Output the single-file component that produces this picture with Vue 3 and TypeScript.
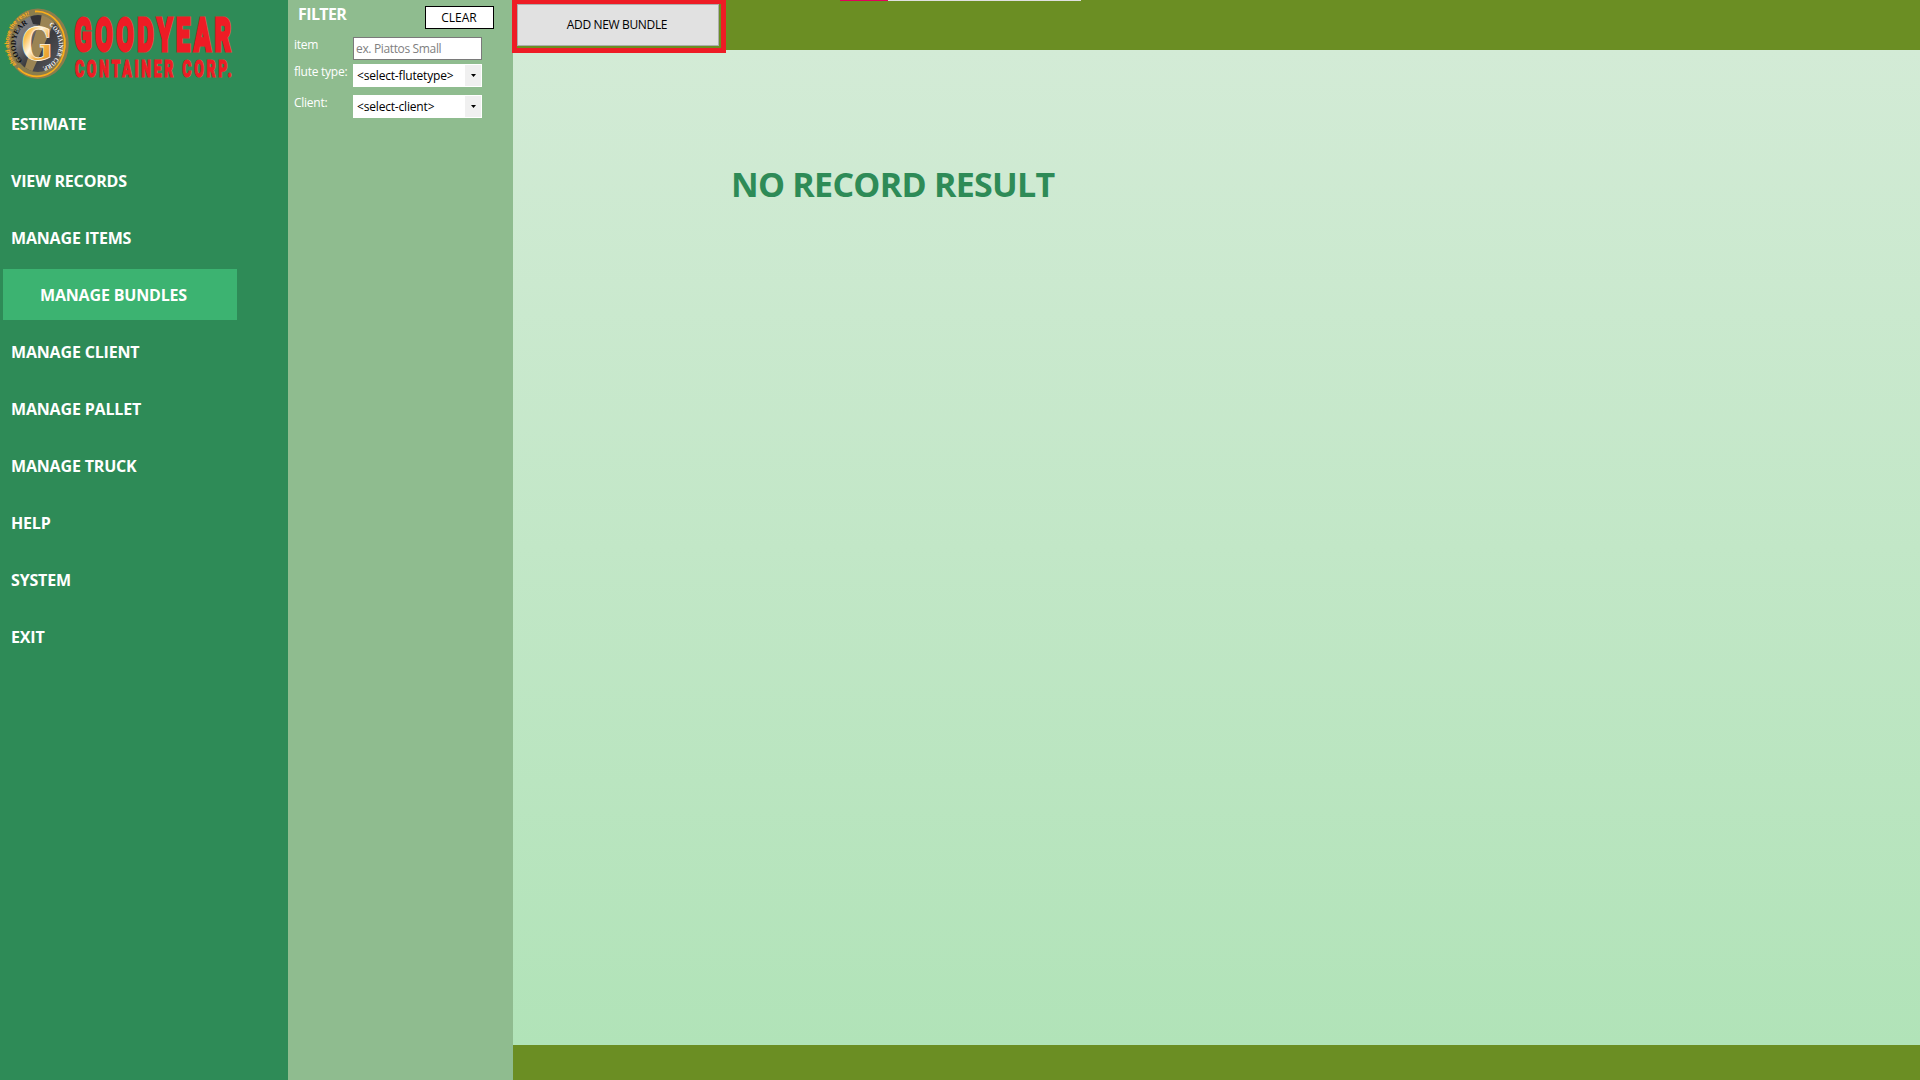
<script setup lang="ts">
import { ref } from 'vue'

interface NavItem {
  id: string
  label: string
}

const navItems: NavItem[] = [
  { id: 'estimate', label: 'ESTIMATE' },
  { id: 'records', label: 'VIEW RECORDS' },
  { id: 'items', label: 'MANAGE ITEMS' },
  { id: 'bundles', label: 'MANAGE BUNDLES' },
  { id: 'client', label: 'MANAGE CLIENT' },
  { id: 'pallet', label: 'MANAGE PALLET' },
  { id: 'truck', label: 'MANAGE TRUCK' },
  { id: 'help', label: 'HELP' },
  { id: 'system', label: 'SYSTEM' },
  { id: 'exit', label: 'EXIT' },
]

const active = ref('bundles')
const itemName = ref('')

function clearFilter() {
  itemName.value = ''
}
</script>

<template>
  <div class="app">
    <aside class="sidebar">
      <svg class="logo" width="240" height="90" viewBox="0 0 240 90">
        <defs>
          <linearGradient id="gold" x1="0" y1="0" x2="1" y2="1">
            <stop offset="0" stop-color="#f39a12" />
            <stop offset="0.25" stop-color="#fbc055" />
            <stop offset="0.42" stop-color="#fff6e0" />
            <stop offset="0.6" stop-color="#f5b548" />
            <stop offset="1" stop-color="#dc8a10" />
          </linearGradient>
          <linearGradient id="disc" x1="0" y1="0" x2="1" y2="1">
            <stop offset="0" stop-color="#8a8a8c" />
            <stop offset="0.3" stop-color="#747477" />
            <stop offset="0.55" stop-color="#3c3c40" />
            <stop offset="1" stop-color="#5c5c60" />
          </linearGradient>
          <clipPath id="discClip"><ellipse cx="38" cy="43.500" rx="24.500" ry="28.500" /></clipPath>
          <path id="arcOuter" d="M16.500 64.500 A25.500 29 0 0 1 34 15" />
          <path id="arcLeft" d="M22.500 60.500 A18.500 21.500 0 0 1 33.500 22.500" />
          <path id="arcRight" d="M49 25.500 A18.500 22 0 0 1 35 66" />
        </defs>
        <ellipse cx="37.800" cy="43.700" rx="31" ry="35.300" fill="#8b7d4c" />
        <path d="M35 11.500 A28 32.500 0 1 1 18 68" fill="none" stroke="#f9ad1b" stroke-width="1.800" />
        <ellipse cx="38" cy="43.500" rx="24.500" ry="28.500" fill="url(#disc)" />
        <g clip-path="url(#discClip)">
          <path d="M42 12 L56 18 L33 70 L30 76 L23 74 Z" fill="#9b8454" />
          <path d="M30 16 L42 13 L40 25 L33 24 Z" fill="#333337" />
        </g>
        <text class="seal slogan"><textPath href="#arcOuter" textLength="60" lengthAdjust="spacingAndGlyphs">ahead above the rest!</textPath></text>
        <text class="seal name"><textPath href="#arcLeft" textLength="43" lengthAdjust="spacingAndGlyphs">GOODYEAR</textPath></text>
        <text class="seal corp"><textPath href="#arcRight" textLength="52" lengthAdjust="spacingAndGlyphs">CONTAINER CORP.</textPath></text>
        <text class="seal-g" transform="translate(21.500 60) scale(0.830 1)">G</text>
        <text class="brand big" transform="translate(74.500 50.500) scale(0.540 1)" textLength="290">GOODYEAR</text>
        <text class="brand small" transform="translate(75 76.500) scale(0.580 1)" textLength="270">CONTAINER CORP.</text>
      </svg>
      <nav class="nav">
        <a
          v-for="item in navItems"
          :key="item.id"
          class="nav-item"
          :class="{ active: item.id === active }"
          @click="active = item.id"
        >{{ item.label }}</a>
      </nav>
    </aside>

    <section class="filter">
      <header class="filter-head">
        <h2 class="filter-title">FILTER</h2>
        <button class="clear" type="button" @click="clearFilter">CLEAR</button>
      </header>
      <div class="row row-item">
        <label class="label">item</label>
        <input v-model="itemName" class="input" type="text" placeholder="ex. Piattos Small" />
      </div>
      <div class="row row-flute">
        <label class="label">flute type:</label>
        <div class="select">
          <span>&lt;select-flutetype&gt;</span>
          <i class="drop"><svg width="5" height="3" viewBox="0 0 5 3"><path d="M0 0H5L2.500 3Z" /></svg></i>
        </div>
      </div>
      <div class="row">
        <label class="label">Client:</label>
        <div class="select">
          <span>&lt;select-client&gt;</span>
          <i class="drop"><svg width="5" height="3" viewBox="0 0 5 3"><path d="M0 0H5L2.500 3Z" /></svg></i>
        </div>
      </div>
    </section>

    <main class="main">
      <header class="topbar">
        <div class="highlight">
          <button class="add" type="button">ADD NEW BUNDLE</button>
        </div>
        <div class="progress"><div class="progress-value"></div></div>
      </header>
      <div class="content">
        <h1 class="empty">NO RECORD RESULT</h1>
      </div>
      <footer class="bottombar"></footer>
    </main>
  </div>
</template>

<style>
body {
  margin: 0;
  overflow: hidden;
}
</style>

<style scoped>
.app {
  display: flex;
  width: 1920px;
  height: 1080px;
  overflow: hidden;
  font-family: 'Open Sans', 'Noto Sans', sans-serif;
  font-size: 12px;
}
.sidebar {
  width: 288px;
  flex: none;
  background: #2e8b57;
}
.logo {
  display: block;
}
.seal {
  font-family: 'Liberation Serif', serif;
  font-weight: 700;
}
.slogan {
  font-family: 'Liberation Sans', sans-serif;
  font-size: 6.5px;
  fill: #fdb01b;
}
.name {
  font-size: 7.5px;
  fill: #0c0c0e;
}
.corp {
  font-size: 6.5px;
  fill: #fff;
}
.seal-g {
  font-family: 'DejaVu Serif', serif;
  font-weight: 700;
  font-size: 44px;
  fill: url(#gold);
  stroke: #fff6e4;
  stroke-width: 0.8px;
}
.brand {
  font-family: Roboto, 'Liberation Sans', sans-serif;
  font-weight: 900;
  fill: #ee1c25;
  stroke: #ee1c25;
}
.big {
  font-size: 47px;
  stroke-width: 3px;
}
.small {
  font-size: 24px;
  stroke-width: 1.2px;
}
.nav {
  display: flex;
  flex-direction: column;
  gap: 6px;
  padding: 8px 51px 0 3px;
}
.nav-item {
  height: 51px;
  padding-left: 8px;
  box-sizing: border-box;
  line-height: 53px;
  font-size: 16px;
  font-weight: 700;
  letter-spacing: -0.17px;
  color: #fff;
  cursor: pointer;
}
.nav-item.active {
  padding-left: 37px;
  background: #3cb371;
}
.filter {
  width: 225px;
  flex: none;
  background: #8fbc8f;
  color: #fff;
}
.filter-head {
  display: flex;
  align-items: flex-start;
  justify-content: space-between;
  height: 37px;
  padding: 0 19px 0 10px;
  box-sizing: border-box;
}
.filter-title {
  margin: 3px 0 0;
  font-size: 16px;
  line-height: 22px;
  font-weight: 700;
  letter-spacing: -0.6px;
}
.clear {
  width: 69px;
  height: 23px;
  margin-top: 6px;
  padding: 1px 1px 0 0;
  border: 1px solid #000;
  background: #fff;
  color: #000;
  font: inherit;
  line-height: 20px;
}
.row {
  display: flex;
  align-items: flex-start;
  padding-left: 6px;
}
.row-item {
  margin-bottom: 4px;
}
.row-flute {
  margin-bottom: 8px;
}
.label {
  width: 59px;
  flex: none;
  line-height: 16px;
  letter-spacing: -0.25px;
  white-space: nowrap;
}
.input {
  width: 129px;
  height: 23px;
  box-sizing: border-box;
  margin: 0;
  padding: 0 2px 1px;
  border: 1px solid #7a7a7a;
  border-radius: 0;
  background: #fff;
  font: inherit;
  letter-spacing: -0.35px;
}
.input::placeholder {
  color: #808080;
  opacity: 1;
}
.select {
  display: flex;
  justify-content: space-between;
  width: 129px;
  height: 23px;
  box-sizing: border-box;
  padding: 1px 1px 1px 4px;
  background: #fff;
  color: #000;
  line-height: 22px;
  letter-spacing: -0.18px;
  white-space: nowrap;
}
.drop {
  display: flex;
  align-items: center;
  justify-content: center;
  width: 16px;
  background: #f0f0f0;
}
.main {
  display: flex;
  flex: 1;
  flex-direction: column;
}
.topbar {
  position: relative;
  z-index: 1;
  height: 50px;
  flex: none;
  background: #6b8e23;
}
.highlight {
  position: absolute;
  top: 0;
  left: -1px;
  box-sizing: border-box;
  width: 214px;
  height: 53px;
  border: 5px solid #ee1c25;
  border-top-width: 4px;
  background: #6b8e23;
}
.add {
  display: block;
  width: 202px;
  height: 42px;
  padding: 0 2px 2px 0;
  border: 1px solid #adadad;
  background: #e1e1e1;
  color: #000;
  font: inherit;
  letter-spacing: -0.35px;
}
.progress {
  width: 241px;
  height: 1px;
  margin-left: 327px;
  background: #e0e0e0;
}
.progress-value {
  width: 48px;
  height: 1px;
  background: #e3005b;
}
.content {
  display: flow-root;
  flex: 1;
  background: linear-gradient(#d3ebd6, #b1e3b8);
}
.empty {
  margin: 110px 0 0 218px;
  font-size: 34px;
  line-height: 48px;
  font-weight: 700;
  letter-spacing: -0.72px;
  color: #2e8b57;
  white-space: nowrap;
}
.bottombar {
  height: 35px;
  flex: none;
  background: #6b8e23;
}
</style>
